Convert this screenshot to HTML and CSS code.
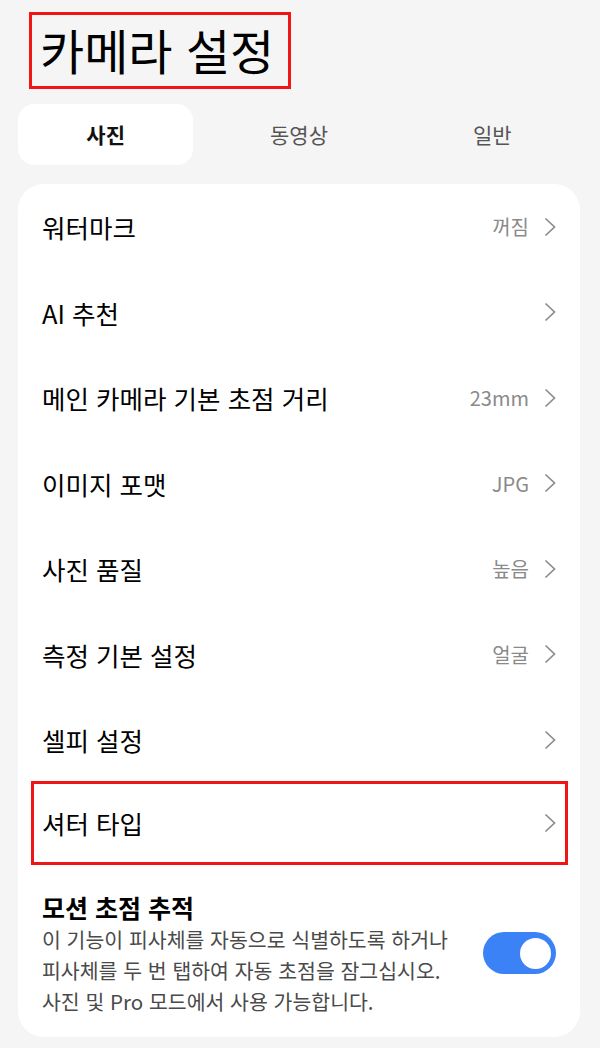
FILE: index.html
```html
<!DOCTYPE html>
<html lang="ko">
<head>
    <meta charset="UTF-8">
    <meta name="viewport" content="width=device-width, initial-scale=1.0">
    <title>카메라 설정</title>
    <link rel="stylesheet" href="styles.css">
</head>
<body>
    <header class="top">
        <h1 class="title">카메라 설정</h1>
    </header>

    <nav class="tabs">
        <div class="tab active">사진</div>
        <div class="tab">동영상</div>
        <div class="tab">일반</div>
    </nav>

    <div class="card">
        <div class="row">
            <span class="label">워터마크</span>
            <span class="value">꺼짐</span>
            <svg class="chev" viewBox="0 0 12 20"><polyline points="1.5,1.5 10.5,10 1.5,18.5"/></svg>
        </div>
        <div class="row">
            <span class="label">AI 추천</span>
            <span class="value"></span>
            <svg class="chev" viewBox="0 0 12 20"><polyline points="1.5,1.5 10.5,10 1.5,18.5"/></svg>
        </div>
        <div class="row">
            <span class="label">메인 카메라 기본 초점 거리</span>
            <span class="value">23mm</span>
            <svg class="chev" viewBox="0 0 12 20"><polyline points="1.5,1.5 10.5,10 1.5,18.5"/></svg>
        </div>
        <div class="row">
            <span class="label">이미지 포맷</span>
            <span class="value">JPG</span>
            <svg class="chev" viewBox="0 0 12 20"><polyline points="1.5,1.5 10.5,10 1.5,18.5"/></svg>
        </div>
        <div class="row">
            <span class="label">사진 품질</span>
            <span class="value">높음</span>
            <svg class="chev" viewBox="0 0 12 20"><polyline points="1.5,1.5 10.5,10 1.5,18.5"/></svg>
        </div>
        <div class="row">
            <span class="label">측정 기본 설정</span>
            <span class="value">얼굴</span>
            <svg class="chev" viewBox="0 0 12 20"><polyline points="1.5,1.5 10.5,10 1.5,18.5"/></svg>
        </div>
        <div class="row">
            <span class="label">셀피 설정</span>
            <span class="value"></span>
            <svg class="chev" viewBox="0 0 12 20"><polyline points="1.5,1.5 10.5,10 1.5,18.5"/></svg>
        </div>
        <div class="row marked">
            <span class="label">셔터 타입</span>
            <span class="value"></span>
            <svg class="chev" viewBox="0 0 12 20"><polyline points="1.5,1.5 10.5,10 1.5,18.5"/></svg>
        </div>
        <div class="row tall">
            <div class="text">
                <div class="label strong">모션 초점 추적</div>
                <p class="desc">이 기능이 피사체를 자동으로 식별하도록 하거나 피사체를 두 번 탭하여 자동 초점을 잠그십시오. 사진 및 Pro 모드에서 사용 가능합니다.</p>
            </div>
            <div class="switch on"><span class="knob"></span></div>
        </div>
    </div>
</body>
</html>
```

FILE: styles.css
```css
body { margin: 0; padding: 0; background-color: #f5f5f5; font-family: "Noto Sans CJK KR", "Noto Sans", sans-serif; color: #000; }

.top { padding: 12px 0 0 29px; height: 80px; }
.title { display: inline-block; margin: 0; padding: 0 14px 0 8px; height: 71px; line-height: 68px; font-size: 48px; font-weight: 400; border: 3px solid #f21515; }

.tabs { display: grid; grid-template-columns: repeat(3, 1fr); gap: 18px; margin: 12px 20px 0 18px; }
.tab { height: 61px; line-height: 61px; text-align: center; font-size: 21px; color: #555; border-radius: 16px; }
.tab.active { background-color: #fff; color: #111; font-weight: 700; }

.card { margin: 19px 20px 0 18px; padding: 0; background-color: #fff; border-radius: 26px; height: 853px; box-sizing: border-box; }

.row { display: flex; align-items: center; height: 85.5px; padding: 0 24px; box-sizing: border-box; }
.label { flex: 1; font-size: 25.5px; font-weight: 400; }
.value { font-size: 20px; color: #8a8a8a; margin-right: 15px; }
.chev { width: 12px; height: 20px; fill: none; stroke: #8c8c8c; stroke-width: 1.7; }

.row.marked { margin: -2px 12px 0 13px; height: 84px; padding: 0 9px 0 8px; border: 3px solid #f21515; }

.row.tall { height: auto; padding: 25px 24px 0; align-items: center; }
.text { flex: 1; }
.label.strong { font-size: 25px; font-weight: 700; line-height: 34px; }
.desc { margin: 0; width: 425px; font-size: 20.5px; line-height: 31px; color: #4a4a4a; word-break: keep-all; }

.switch { width: 75px; height: 42px; border-radius: 21px; background-color: #3b82f6; margin-left: 16px; display: flex; align-items: center; justify-content: flex-end; padding: 0 5px; box-sizing: border-box; }
.knob { width: 31px; height: 31px; border-radius: 50%; background-color: #fff; }
```
